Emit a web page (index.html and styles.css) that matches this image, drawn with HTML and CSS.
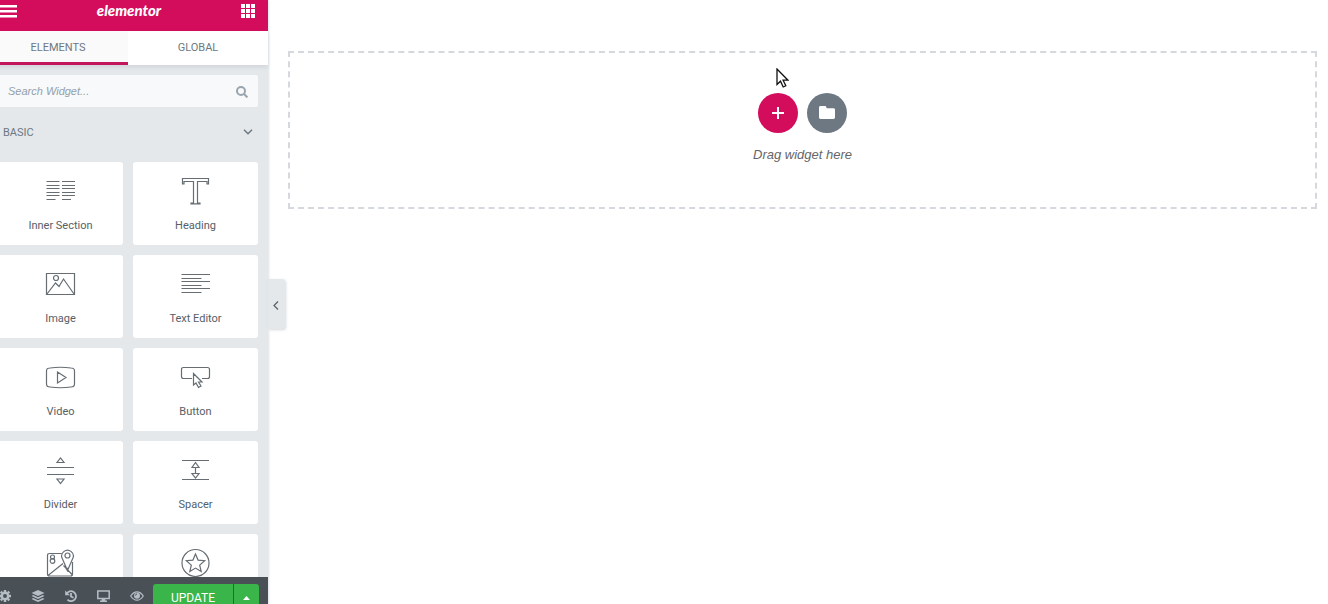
FILE: index.html
```html
<!DOCTYPE html>
<html lang="en">
<head>
<meta charset="utf-8">
<title>Elementor</title>
<link rel="stylesheet" href="styles.css">
</head>
<body>
<div class="editor">
  <aside class="panel">
    <header class="panel-header">
      <button class="icon-button" aria-label="Menu"><svg width="17" height="13" viewBox="0 0 17 13" fill="currentColor"><path d="M0 0h17v2.500H0zM0 5h17v2.500H0zM0 10h17v2.500H0z"/></svg></button>
      <h1 class="logo">elementor</h1>
      <button class="icon-button" aria-label="Widgets"><svg width="14" height="14" viewBox="0 0 14 14" fill="currentColor"><path d="M0 0h4v4H0zM5 0h4v4H5zM10 0h4v4h-4zM0 5h4v4H0zM5 5h4v4H5zM10 5h4v4h-4zM0 10h4v4H0zM5 10h4v4H5zM10 10h4v4h-4z"/></svg></button>
    </header>
    <nav class="tabs">
      <button class="tab tab-active">ELEMENTS</button>
      <button class="tab">GLOBAL</button>
    </nav>
    <div class="panel-body">
      <div class="search">
        <input class="search-input" type="text" aria-label="Search Widget" placeholder="Search Widget...">
        <svg class="search-icon" width="12" height="12" viewBox="0 0 12 12" fill="none" stroke="currentColor" stroke-width="2"><circle cx="5" cy="5" r="4"/><path d="M8 8l3.400 3.400"/></svg>
      </div>
      <button class="category">
        <span>BASIC</span>
        <svg width="10" height="6" viewBox="0 0 10 6" fill="none" stroke="currentColor" stroke-width="1.500"><path d="M1 .8l4 4 4-4"/></svg>
      </button>
      <div class="widgets">
        <button class="widget">
          <svg class="widget-icon" viewBox="0 0 31 30"><path d="M1.500 5.500h13M1.500 9.500h13M1.500 12.500h13M1.500 16.500h13M1.500 19.500h13M1.500 23.500h9M17 5.500h13M17 9.500h13M17 12.500h13M17 16.500h13M17 19.500h13M17 23.500h9"/></svg>
          <span>Inner Section</span>
        </button>
        <button class="widget">
          <svg class="widget-icon" viewBox="0 0 31 30"><path d="M2.500 2.500h26v5.500h-1.500V5.500h-9.500v21.500h2.500v.8h-9V27h2.500V5.500H4V8H2.500z"/></svg>
          <span>Heading</span>
        </button>
        <button class="widget">
          <svg class="widget-icon" viewBox="0 0 31 30"><path d="M1.500 4.500h28v21h-28zM2 25l8.500-11 3.500 3.500 4.500-7.500L29 25"/><circle cx="11" cy="9" r="2.500"/></svg>
          <span>Image</span>
        </button>
        <button class="widget">
          <svg class="widget-icon" viewBox="0 0 31 30"><path d="M1.500 5.500h28.500M1.500 9.500h20M1.500 12.500h28.500M1.500 16.500h20M1.500 19.500h28.500M1.500 23.500h20"/></svg>
          <span>Text Editor</span>
        </button>
        <button class="widget">
          <svg class="widget-icon" viewBox="0 0 31 30"><path d="M5 6Q15.500 4.500 26 6Q29.500 6 29.500 9V22Q29.500 25 26 25Q15.500 26.500 5 25Q1.500 25 1.500 22V9Q1.500 6 5 6zM12.500 10l8.500 5.500-8.500 5.500z"/></svg>
          <span>Video</span>
        </button>
        <button class="widget">
          <svg class="widget-icon" viewBox="0 0 31 30"><path d="M12 16.500H3.500q-2 0-2-2v-7q0-2 2-2h24q2 0 2 2v7q0 2-2 2H22M13.500 11.500v11.500l2.500-2 2.500 4.500 2.500-1.500-2.500-4h3.500z"/></svg>
          <span>Button</span>
        </button>
        <button class="widget">
          <svg class="widget-icon" viewBox="0 0 31 30"><path d="M2 12.500h27M2 19.500h27M12 7.500h7L15.500 3zM12 24h7l-3.500 4.500z"/></svg>
          <span>Divider</span>
        </button>
        <button class="widget">
          <svg class="widget-icon" viewBox="0 0 31 30"><path d="M2 5.500h27M2 24.500h27M15.500 12v7M12 12.500h7L15.500 7.500zM12 18.500h7L15.500 23z"/></svg>
          <span>Spacer</span>
        </button>
        <button class="widget" aria-label="Google Maps">
          <svg class="widget-icon" viewBox="0 0 31 30"><path d="M16.500 5.500H4.500q-2 0-2 2v18.500q0 2 2 2h21q2 0 2-2V14M3 27.500l15-12M23 20l-2 2M18.500 17.500l9 9.500M22.500 22.500L17.500 11a5.800 5.800 0 1 1 10 0z"/><circle cx="22.500" cy="7.500" r="2.500"/><circle cx="7.500" cy="9" r="2"/><circle cx="7.500" cy="13" r="2.300"/></svg>
        </button>
        <button class="widget" aria-label="Icon">
          <svg class="widget-icon" viewBox="0 0 31 30"><circle cx="15.500" cy="15" r="13.500"/><path d="M15.500 6l2.600 6.100 6.600.600-5 4.400 1.500 6.500-5.700-3.500-5.700 3.500 1.500-6.500-5-4.400 6.600-.600z"/></svg>
        </button>
      </div>
    </div>
    <footer class="panel-footer">
      <button class="tool" aria-label="Settings"><svg width="12" height="12" viewBox="0 0 12 12"><circle cx="6" cy="6" r="3.200" fill="none" stroke="currentColor" stroke-width="2.400"/><path d="M6 0v2M6 10v2M0 6h2M10 6h2M1.700 1.700l1.500 1.500M8.800 8.800l1.500 1.500M1.700 10.300l1.500-1.500M8.800 3.200l1.500-1.500" stroke="currentColor" stroke-width="2.400"/></svg></button>
      <button class="tool" aria-label="Navigator"><svg width="14" height="12" viewBox="0 0 14 12" fill="currentColor"><path d="M7 0l6.500 3L7 6 .500 3zM2.200 5L7 7.200 11.800 5l1.700.900L7 8.900.500 5.900zM2.200 8L7 10.200 11.800 8l1.700.900L7 12 .500 8.900z"/></svg></button>
      <button class="tool" aria-label="History"><svg width="12" height="12" viewBox="0 0 12 12" fill="none" stroke="currentColor" stroke-width="1.800"><path d="M1.500 4A5 5 0 1 1 2.500 9.700M6 3v3.500l2.500 1.300"/><path d="M.200.500v4.800H5z" fill="currentColor" stroke="none"/></svg></button>
      <button class="tool" aria-label="Responsive mode"><svg width="13" height="12" viewBox="0 0 13 12"><path d="M.800 1h11.400v7.500H.800z" fill="none" stroke="currentColor" stroke-width="1.500"/><path d="M5 8.500h3l.500 2H10V12H3v-1.500h1.500z" fill="currentColor"/></svg></button>
      <button class="tool" aria-label="Preview"><svg width="14" height="10" viewBox="0 0 14 10"><path d="M.700 5Q3.500.800 7 .800T13.300 5Q10.500 9.200 7 9.200T.700 5z" fill="none" stroke="currentColor" stroke-width="1.200"/><circle cx="7" cy="4.800" r="3" fill="currentColor"/><path d="M5.500 4.500Q5.500 3 7 3" fill="none" stroke="#495157"/></svg></button>
      <div class="publish">
        <button class="update">UPDATE</button>
        <button class="update-more" aria-label="Save options"><svg width="7" height="4" viewBox="0 0 7 4" fill="currentColor"><path d="M0 4h7L3.500 0z"/></svg></button>
      </div>
    </footer>
    <button class="collapse" aria-label="Hide panel"><svg width="6" height="9" viewBox="0 0 6 9" fill="none" stroke="currentColor" stroke-width="1.200"><path d="M5 .500l-4 4 4 4"/></svg></button>
  </aside>
  <main class="canvas">
    <section class="dropzone">
      <div class="actions">
        <button class="round round-add" aria-label="Add section"><svg width="12" height="12" viewBox="0 0 12 12" fill="currentColor"><path d="M5 0h2v5h5v2H7v5H5V7H0V5h5z"/></svg></button>
        <button class="round" aria-label="Add template"><svg width="16" height="14" viewBox="0 0 16 14" fill="currentColor"><path d="M1.500 0H6q1 0 1.300 1l.400 1.200h6.800Q16 2.200 16 3.600v8Q16 13 14.500 13h-13Q0 13 0 11.600V1.400Q0 0 1.500 0z"/></svg></button>
      </div>
      <p class="hint">Drag widget here</p>
    </section>
    <svg class="pointer" width="13" height="20" viewBox="0 0 13 20"><path d="M1 1v15.500l3.500-3.300 2.700 5.800 2.600-1.200-2.700-5.600H12z" fill="#fff" stroke="#111" stroke-width="1.300"/></svg>
  </main>
</div>
</body>
</html>
```
FILE: styles.css
```css
* { box-sizing: border-box; }

body {
  margin: 0;
  overflow: hidden;
  background: #fff;
  font-family: Roboto, "Liberation Sans", sans-serif;
  font-size: 11px;
  color: #556068;
}

button {
  margin: 0;
  padding: 0;
  border: 0;
  background: none;
  color: inherit;
  font: inherit;
}

svg { display: block; }

.editor {
  display: flex;
  height: 100vh;
}

.panel {
  position: relative;
  display: flex;
  flex-direction: column;
  flex: none;
  width: 280px;
  margin-left: -12px;
  background: #e4e8eb;
  box-shadow: 1px 0 2px #dfe3e6;
}

.panel-header {
  display: flex;
  justify-content: space-between;
  padding: 0 13px 9px 12px;
  height: 31px;
  background: #d30c5c;
  color: #fff;
}

.icon-button {
  display: flex;
  align-items: center;
}

.logo {
  margin: 0;
  font: italic 900 15px/20px Lato, sans-serif;
}

.tabs {
  display: flex;
  height: 34px;
  background: #fff;
  box-shadow: 0 3px 3px #d5dade;
}

.tab {
  flex: 1;
  padding-top: 2px;
  border-bottom: 3px solid transparent;
  color: #6d7882;
}

.tab-active {
  background: #fafafa;
  border-color: #c2185b;
}

.panel-body {
  flex: 1;
  min-height: 0;
  overflow: hidden;
  padding: 10px;
}

.search { position: relative; }

.search-input {
  display: block;
  width: 100%;
  height: 32px;
  padding: 0 32px 0 10px;
  border: 0;
  border-radius: 2px;
  background: #f7f9fb;
  font: italic 11px "Liberation Sans", Arial, sans-serif;
  color: #6d7882;
}

.search-input::placeholder { color: #94a0aa; }

.search-icon {
  position: absolute;
  top: 11px;
  right: 10px;
  color: #9aa5ae;
}

.category {
  display: flex;
  align-items: center;
  justify-content: space-between;
  width: 100%;
  height: 50px;
  margin-bottom: 5px;
  padding: 0 5px;
  color: #6d7882;
}

.widgets {
  display: grid;
  grid-template-columns: 1fr 1fr;
  gap: 10px;
}

.widget {
  display: flex;
  flex-direction: column;
  align-items: center;
  gap: 13px;
  height: 83px;
  padding-top: 14px;
  border-radius: 3px;
  background: #fff;
  line-height: 14px;
}

.widget-icon {
  width: 31px;
  height: 30px;
  fill: none;
  stroke: #666d73;
  stroke-width: 1.2;
}

.panel-footer {
  display: flex;
  align-items: flex-start;
  height: 27px;
  padding: 7px 9px 0 0;
  overflow: hidden;
  background: #495157;
  color: #b5bec5;
}

.tool {
  display: flex;
  align-items: center;
  justify-content: center;
  width: 33px;
  height: 24px;
}

.publish {
  display: flex;
  flex: 1;
  gap: 1px;
  height: 28px;
  color: #fff;
}

.update {
  flex: 1;
  border-radius: 3px 0 0 3px;
  background: #39b54a;
  font-size: 12px;
}

.update-more {
  display: flex;
  align-items: center;
  justify-content: center;
  width: 25px;
  border-radius: 0 3px 3px 0;
  background: #39b54a;
}

.collapse {
  position: absolute;
  top: 279px;
  left: 100%;
  display: flex;
  align-items: center;
  padding: 2px 0 0 5px;
  width: 17px;
  height: 50px;
  border-radius: 0 3px 3px 0;
  background: #e4e8eb;
  box-shadow: 1px 1px 3px #d5d9dd;
}

.canvas {
  position: relative;
  flex: 1;
  padding: 51px 11px 0 20px;
}

.dropzone {
  display: flex;
  flex-direction: column;
  align-items: center;
  gap: 13px;
  padding: 40px 0 43px;
  border: 2px dashed #d5d8dc;
}

.actions {
  display: flex;
  gap: 9px;
}

.round {
  display: flex;
  align-items: center;
  justify-content: center;
  width: 40px;
  height: 40px;
  border-radius: 50%;
  background: #6d7882;
  color: #fff;
}

.round-add { background: #d30c5c; }

.hint {
  margin: 0;
  font: italic 13px/18px "Liberation Sans", Arial, sans-serif;
  color: #666;
}

.pointer {
  position: absolute;
  top: 68px;
  left: calc(50% - 22px);
}
```
